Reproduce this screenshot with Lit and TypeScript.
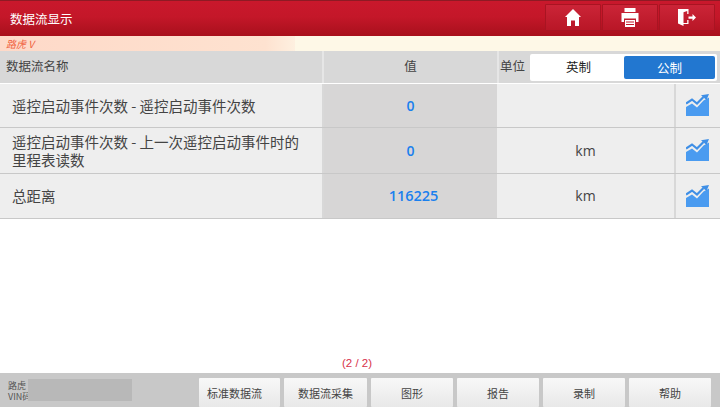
import { LitElement, html, css } from "lit";
import { customElement } from "lit/decorators.js";

const chart = html`<svg width="23" height="22" viewBox="0 0 23 22">
  <path fill="#4a9bf0" d="M0 13 L6 9.5 L11 13.5 L17.5 6.5 L23 3.5 L23 22 L0 22 Z"/>
  <path fill="none" stroke="#3f8fe6" stroke-width="2.2" d="M0 9.5 L6 5.5 L11 9.5 L17.5 3"/>
  <path fill="#3f8fe6" d="M15 1.2 L23 0 L20.5 6 Z"/>
</svg>`;

@customElement("app-root")
export class AppRoot extends LitElement {
  static styles = css`
    :host { display: flex; flex-direction: column; width: 720px; height: 407px; overflow: hidden; background: #fff;
      font-family: "Noto Sans CJK SC", "Noto Sans", sans-serif; color: #444; }
    .top { height: 36px; box-sizing: border-box; flex: none; display: flex; justify-content: space-between;
      background: linear-gradient(#c9182c 0%, #c41729 45%, #a8101c 100%); border-top: 1px solid #8e1a24; padding: 3px 5px 0 10px; }
    .title { color: #fff; font-size: 12.5px; line-height: 30px; }
    .tools { display: flex; gap: 1px; }
    .tool { width: 56px; height: 27px; display: flex; align-items: center; justify-content: center;
      background: linear-gradient(#cc2538, #b81626); box-shadow: inset 0 0 0 1px #a91422; border-radius: 1px; }
    .notice { height: 15px; flex: none; background: #fef8e7; display: flex; }
    .notice span { width: 295px; background: linear-gradient(90deg, #fed9c8, #fee2d0 90%, #fef0e0); color: #f0603c; font-size: 10px; font-style: italic; line-height: 15px; padding-left: 6px; box-sizing: border-box; }
    .row { display: grid; grid-template-columns: 324px 173px 1fr 44px; border-bottom: 1px solid #c8c8c8; background: #eeeeee; box-sizing: border-box; }
    .row > div { display: flex; align-items: center; box-sizing: border-box; line-height: 18px; }
    .head { height: 33px; background: #d8d8d8; border-bottom: 1px solid #fff; grid-template-columns: 324px 173px 1fr; font-size: 12.5px; }
    .name { padding-left: 12px; font-size: 14.5px; border-right: 2px solid #d8d8d8; }
    .head .name { padding: 0 0 2px 6px; font-size: 12.5px; border-right: 2px solid #e6e6e6; }
    .val { justify-content: center; background: #d7d6d6; color: #1a80ee; font-weight: 600; font-family: "Open Sans", sans-serif; font-size: 14px; }
    .val.wide { padding-left: 6px; font-size: 14.5px; }
    .head .val { color: #444; font-weight: 400; font-family: inherit; font-size: 12.5px; background: #d8d8d8; padding-bottom: 2px; }
    .unit { justify-content: center; font-size: 14px; font-family: "Open Sans", sans-serif; border-right: 2px solid #d8d8d8; }
    .icon { justify-content: center; padding: 0 2px 1px 0; }
    .r1 { height: 44px; } .r2 { height: 46px; } .r3 { height: 45px; }
    .unitbar { padding-left: 1px; border-left: 2px solid #e6e6e6; white-space: nowrap; padding-bottom: 2px; }
    .switch { margin: 2px 0 0 5px; width: 187px; height: 27px; background: #fff; border-radius: 2px; display: flex; align-items: center; padding-right: 2px; box-sizing: border-box; color: #222; }
    .switch span { flex: 1; text-align: center; padding-left: 12px; }
    .switch .on { flex: none; width: 91px; height: 23px; line-height: 23px; background: #2277d0; color: #fff; border-radius: 2px; margin-left: 9px; padding-left: 0; }
    .spacer { flex: 1; display: flex; align-items: flex-end; justify-content: center; }
    .page { color: #d8324a; font-size: 11.5px; font-family: "Liberation Sans", sans-serif; line-height: 13px; margin: 0 6px 3px 0; }
    .foot { height: 34px; flex: none; background: #c8c8c8; display: flex; align-items: flex-end; padding-right: 9px; box-sizing: border-box; }
    .veh { width: 199px; height: 22px; align-self: center; position: relative; padding: 1px 0 0 8px; font-size: 9px; line-height: 11px; color: #555; box-sizing: border-box; }
    .mask { position: absolute; left: 28px; top: 0; width: 104px; height: 22px; background: #b8b8b8; }
    .btns { display: flex; gap: 4px; flex: 1; min-width: 0; }
    .btn { flex: 0 0 82px; box-sizing: border-box; height: 29px; display: flex; align-items: center; justify-content: center; font-size: 11px; color: #444;
      background: linear-gradient(#f8f8f8, #e8e8e8); border-radius: 1px; }
    .btn.first { flex-basis: 81px; padding-right: 10px; }
    .btn.second { flex-basis: 83px; }
  `;
  render() {
    return html`
      <div class="top">
        <span class="title">数据流显示</span>
        <div class="tools">
          <div class="tool"><svg width="16" height="17" viewBox="0 0 16 17"><path fill="#fff" d="M8 0 L16 8 L14 8 L14 17 L10 17 L10 11.5 L6 11.5 L6 17 L2 17 L2 8 L0 8 Z"/></svg></div>
          <div class="tool"><svg width="18" height="19" viewBox="0 0 18 19"><path fill="#fff" d="M3.5 0 H14.5 V4 H3.5 Z M0.5 5 H17.5 V14 H15 V10.5 H3 V14 H0.5 Z M4 12 H14 V19 H4 Z"/><path stroke="#c41729" stroke-width="1" d="M5 14 H13 M5 16.5 H13"/></svg></div>
          <div class="tool"><svg width="18" height="17" viewBox="0 0 18 17"><path fill="#fff" d="M0 0 H10.5 V5 H9.2 V2 L5.5 3.2 V14 H9.2 V11 H10.5 V15 H5.5 V17 L0 14.5 Z M10.5 7.5 H14.5 V5 L18 8.5 L14.5 12 V9.8 H10.5 Z"/></svg></div>
        </div>
      </div>
      <div class="notice"><span>路虎 V</span></div>
      <div class="row head">
        <div class="name">数据流名称</div>
        <div class="val">值</div>
        <div class="unitbar">单位<div class="switch"><span>英制</span><span class="on">公制</span></div></div>
      </div>
      <div class="row r1"><div class="name">遥控启动事件次数 - 遥控启动事件次数</div><div class="val">0</div><div class="unit"></div><div class="icon">${chart}</div></div>
      <div class="row r2"><div class="name">遥控启动事件次数 - 上一次遥控启动事件时的<br />里程表读数</div><div class="val">0</div><div class="unit">km</div><div class="icon">${chart}</div></div>
      <div class="row r3"><div class="name">总距离</div><div class="val wide">116225</div><div class="unit">km</div><div class="icon">${chart}</div></div>
      <div class="spacer"><span class="page">(2 / 2)</span></div>
      <div class="foot">
        <div class="veh"><div>路虎</div><div>VIN码</div><div class="mask"></div></div>
        <div class="btns">
          <div class="btn first">标准数据流</div><div class="btn second">数据流采集</div><div class="btn">图形</div><div class="btn">报告</div><div class="btn">录制</div><div class="btn">帮助</div>
        </div>
      </div>`;
  }
}
